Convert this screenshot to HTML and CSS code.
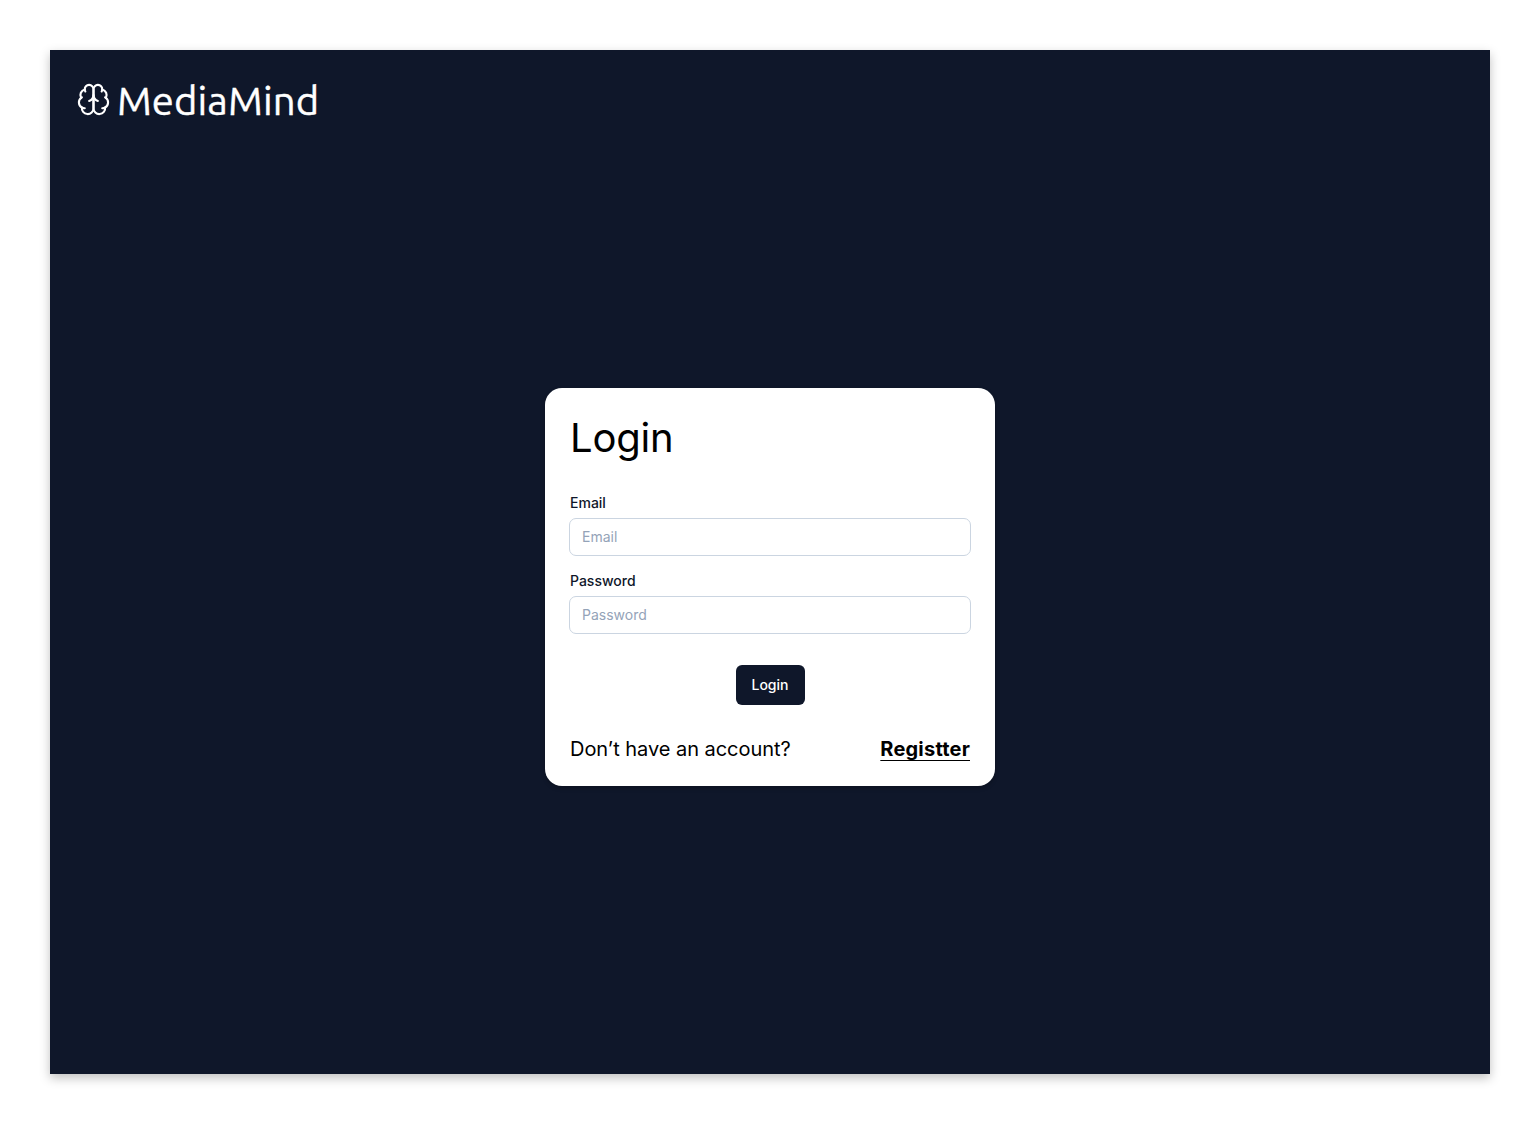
FILE: index.html
```html
<!DOCTYPE html>
<html lang="en">
<head>
<meta charset="utf-8">
<title>MediaMind</title>
<link rel="stylesheet" href="styles.css">
</head>
<body>
<main class="screen">
  <header class="brand">
    <svg class="brand-icon" viewBox="0 0 24 24" aria-hidden="true">
      <path d="M12 5a3 3 0 1 0-5.997.125 4 4 0 0 0-2.526 5.77 4 4 0 0 0 .556 6.588A4 4 0 1 0 12 18Z"/>
      <path d="M12 5a3 3 0 1 1 5.997.125 4 4 0 0 1 2.526 5.77 4 4 0 0 1-.556 6.588A4 4 0 1 1 12 18Z"/>
      <path d="M15 13a4.5 4.5 0 0 1-3-4 4.5 4.5 0 0 1-3 4"/>
      <path d="M17.599 6.5a3 3 0 0 0 .399-1.375M6.003 5.125A3 3 0 0 0 6.401 6.5M3.477 10.896a4 4 0 0 1 .585-.396M19.938 10.5a4 4 0 0 1 .585.396M6 18a4 4 0 0 1-1.967-.516M19.967 17.484A4 4 0 0 1 18 18"/>
    </svg>
    <span class="brand-name">MediaMind</span>
  </header>
  <form class="card">
    <h1 class="title">Login</h1>
    <label class="label" for="email">Email</label>
    <input class="input" id="email" type="email" placeholder="Email">
    <label class="label" for="password">Password</label>
    <input class="input" id="password" type="password" placeholder="Password">
    <button class="submit" type="button">Login</button>
    <div class="footer">
      <span class="prompt">Don’t have an account?</span>
      <a class="register" href="#">Registter</a>
    </div>
  </form>
</main>
</body>
</html>
```
FILE: styles.css
```css
* { box-sizing: border-box; }

body {
  margin: 0;
  padding: 50px;
  background: #fff;
  font-family: Inter, sans-serif;
}

.screen {
  display: flex;
  flex-direction: column;
  align-items: center;
  width: 1440px;
  height: 1024px;
  background: #0f172a;
  box-shadow: 0 4px 10px rgba(0, 0, 0, 0.25);
}

.brand {
  display: flex;
  align-items: center;
  align-self: flex-start;
  height: 50px;
  margin: 25px 0 0 26px;
  color: #fff;
}

.brand-icon {
  width: 35px;
  height: 35px;
  margin-bottom: 1px;
  fill: none;
  stroke: currentColor;
  stroke-width: 1.45;
  stroke-linecap: round;
  stroke-linejoin: round;
}

.brand-name {
  padding-top: 2px;
  margin-left: 6px;
  font: 400 40px/50px Ubuntu, "Noto Sans", sans-serif;
  letter-spacing: 0.1px;
  -webkit-text-stroke: 0.4px currentColor;
}

.card {
  display: flex;
  flex-direction: column;
  width: 450px;
  height: 398px;
  margin-top: 263px;
  padding: 25px;
  border-radius: 17px;
  background: #fff;
  box-shadow: 0 2px 4px rgba(0, 0, 0, 0.25);
  color: #000;
}

.title {
  margin: 1px 0 31px;
  font-size: 40px;
  font-weight: 400;
  line-height: 48px;
  letter-spacing: -0.2px;
}

.label {
  margin-bottom: 5px;
  color: #0f172a;
  font-size: 14px;
  font-weight: 500;
  line-height: 20px;
}

.input {
  height: 38px;
  margin: 0 -1px 15px;
  padding: 0 12px 2px;
  border: 1px solid #cbd5e1;
  border-radius: 7px;
  background: #fff;
  font: 400 14px/20px Inter, sans-serif;
}

.input::placeholder { color: #94a3b8; }

.submit {
  align-self: center;
  height: 40px;
  margin-top: 16px;
  padding: 0 16px;
  border: 0;
  border-radius: 6px;
  background: #0f172a;
  color: #fff;
  font: 500 14px/24px Inter, sans-serif;
}

.footer {
  display: flex;
  justify-content: space-between;
  margin-top: 32px;
  font-size: 20px;
  line-height: 24px;
}

.prompt { letter-spacing: -0.04px; }

.register {
  color: inherit;
  font-weight: 700;
  font-feature-settings: "calt" 0;
  letter-spacing: 0.2px;
  text-decoration-thickness: 1.4px;
  text-underline-offset: 4px;
}
```
